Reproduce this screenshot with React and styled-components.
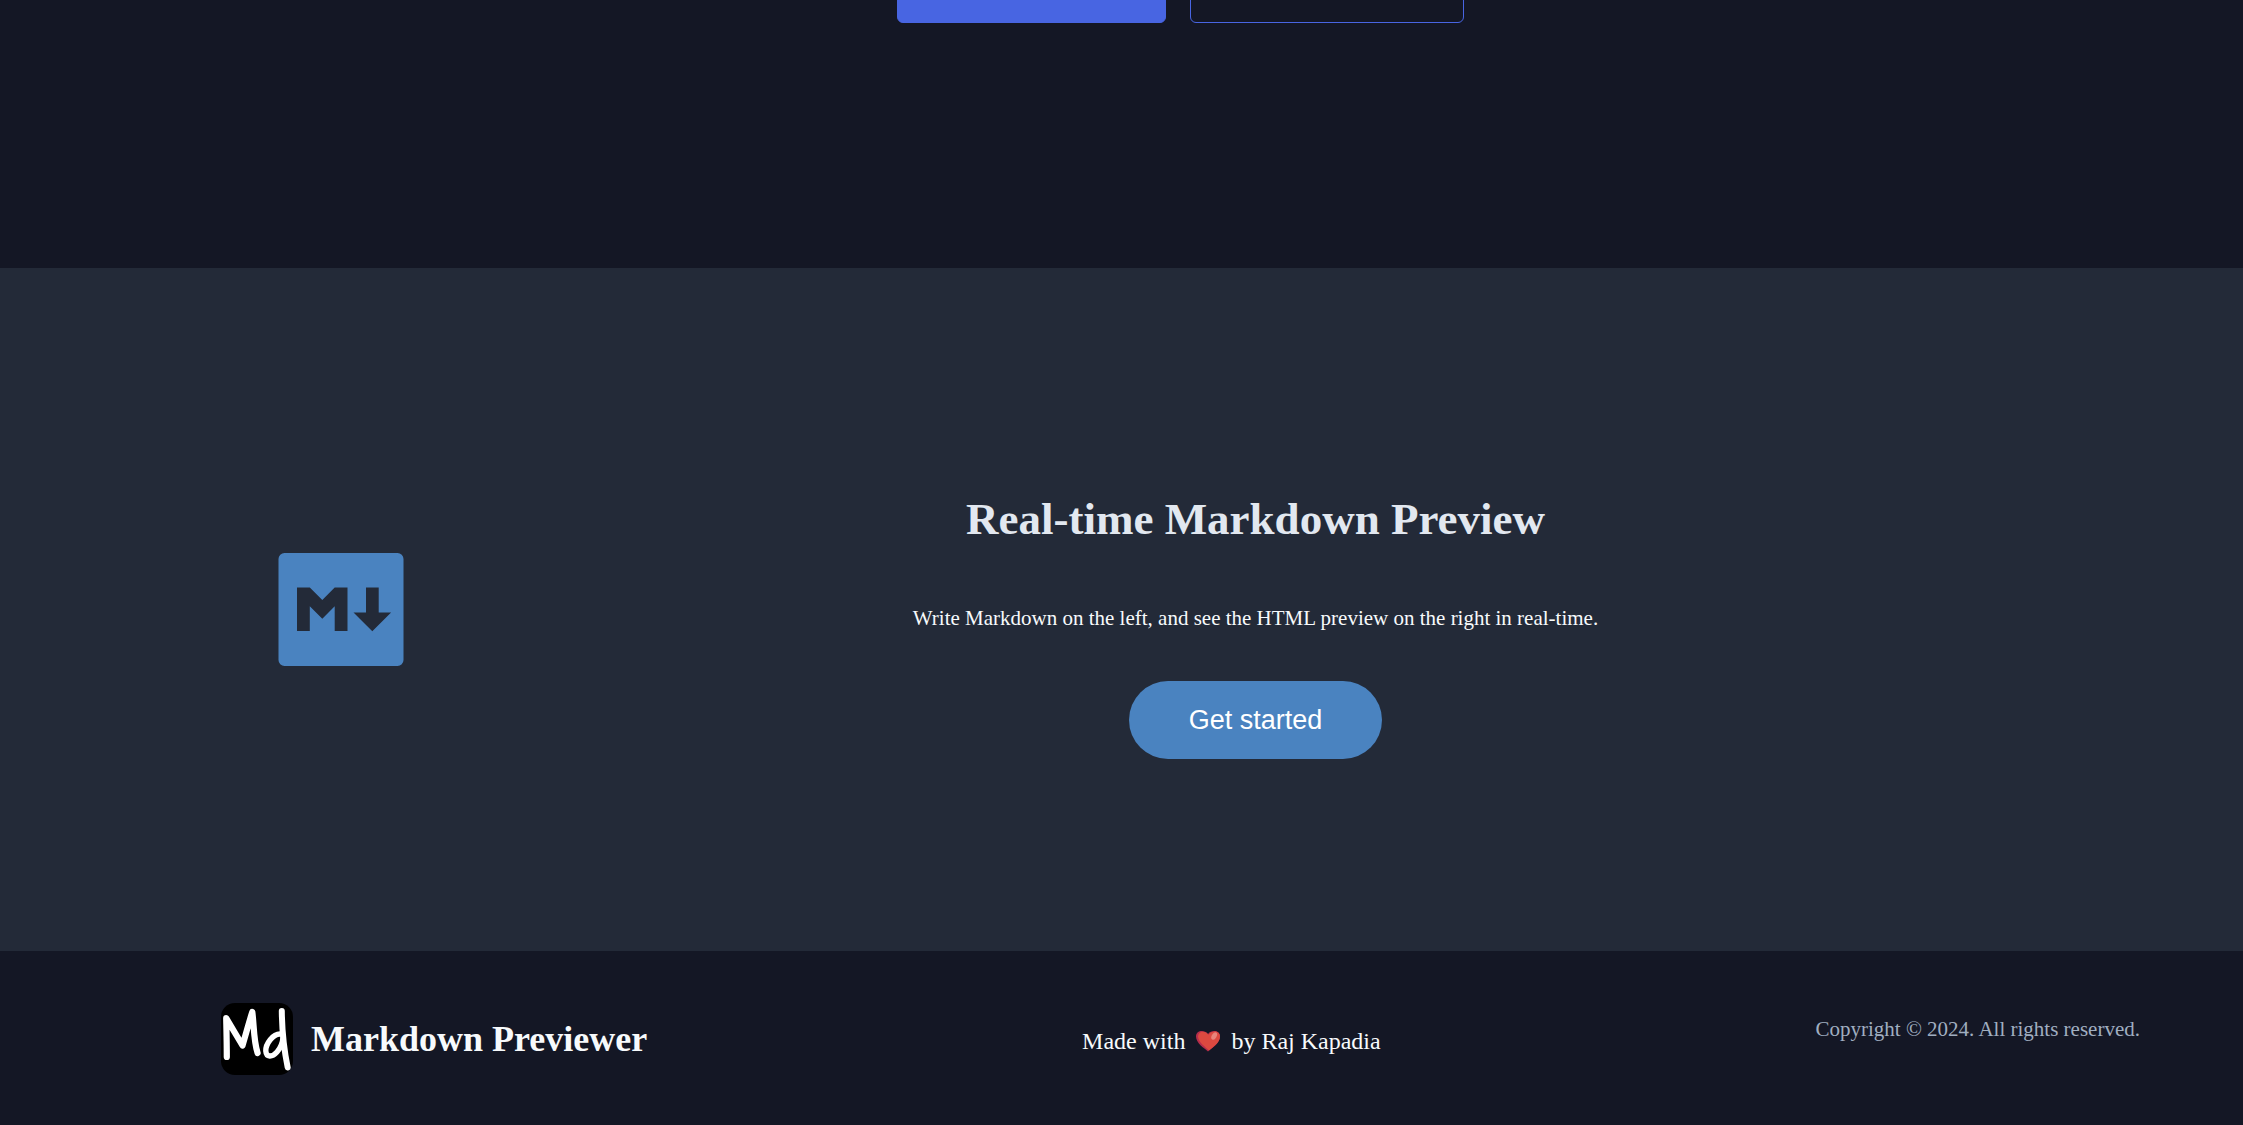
import React from "react";
import styled, { createGlobalStyle } from "styled-components";

const serif = `"Liberation Serif", "Times New Roman", serif`;
const sans = `"Liberation Sans", Arial, sans-serif`;

const GlobalStyle = createGlobalStyle`
  *, *::before, *::after { box-sizing: border-box; }
  body {
    margin: 0;
    background: #141725;
    color: #f7fafc;
    font-family: ${serif};
  }
`;

const Page = styled.div`
  display: flex;
  flex-direction: column;
  min-height: 100vh;
`;

const Hero = styled.section`
  display: flex;
  justify-content: center;
  padding: 0 0 245px 118px;
  overflow: hidden;
`;

const HeroActions = styled.div`
  display: flex;
  gap: 24px;
  margin-top: -40px;
`;

const HeroButton = styled.button`
  width: ${(p) => (p.$outlined ? 274 : 269)}px;
  height: 63px;
  border: 1px solid #4865e2;
  border-radius: 6px;
  background: ${(p) => (p.$outlined ? "transparent" : "#4865e2")};
  cursor: pointer;
`;

const Feature = styled.section`
  display: grid;
  grid-template-columns: auto 1fr;
  align-items: center;
  padding: 192px 136px 192px 278px;
  background: #232a38;
`;

const FeatureIcon = styled.svg`
  display: block;
  width: 126px;
  height: 113px;
`;

const FeatureBody = styled.div`
  display: flex;
  flex-direction: column;
  align-items: center;
  padding-top: 24px;
  text-align: center;
`;

const FeatureTitle = styled.h1`
  margin: 0;
  color: #e2e8f0;
  font-size: 45px;
  line-height: 71px;
`;

const FeatureText = styled.p`
  margin: 48px 0;
  font-size: 21px;
  line-height: 30px;
`;

const StartButton = styled.button`
  padding: 23px 60px;
  border: 0;
  border-radius: 40px;
  background: #4a83c0;
  color: #fff;
  font-family: ${sans};
  font-size: 27px;
  line-height: 32px;
  cursor: pointer;
`;

const Footer = styled.footer`
  display: flex;
  flex: 1;
  align-items: center;
  justify-content: space-between;
  padding: 50px 103px 48px 221px;
`;

const Brand = styled.div`
  display: flex;
  align-items: center;
  gap: 18px;
`;

const BrandLogo = styled.svg`
  display: block;
  width: 72px;
  height: 72px;
`;

const BrandName = styled.h2`
  margin: 0;
  font-size: 36px;
  line-height: 40px;
`;

const Credit = styled.p`
  display: flex;
  align-items: center;
  gap: 10px;
  margin: 0;
  padding-top: 4px;
  font-size: 24px;
  line-height: 36px;
`;

const Heart = styled.svg`
  width: 26px;
  height: 24px;
`;

const Copyright = styled.small`
  padding-bottom: 20px;
  color: #a0aec0;
  font-size: 21px;
  line-height: 30px;
`;

export default function App() {
  return (
    <Page>
      <GlobalStyle />
      <Hero>
        <HeroActions>
          <HeroButton type="button" aria-label="Primary action" />
          <HeroButton type="button" aria-label="Secondary action" $outlined />
        </HeroActions>
      </Hero>
      <Feature>
        <FeatureIcon viewBox="0 0 126 113" aria-hidden="true">
          <path
            fill="#4a83c0"
            fillRule="evenodd"
            d="M6.5 0H119.5a6 6 0 0 1 6 6V107a6 6 0 0 1-6 6H6.5a6 6 0 0 1-6-6V6a6 6 0 0 1 6-6ZM19 34.5V78H31.8V53.3L44.3 65.8 56.7 53.3V78H69.5V34.5H56.7L44.3 47 31.8 34.5ZM88 34.5V59.5H75.5L94.3 78.3 113.1 59.5H100.7V34.5Z"
          />
        </FeatureIcon>
        <FeatureBody>
          <FeatureTitle>Real-time Markdown Preview</FeatureTitle>
          <FeatureText>
            Write Markdown on the left, and see the HTML preview on the right in real-time.
          </FeatureText>
          <StartButton type="button">Get started</StartButton>
        </FeatureBody>
      </Feature>
      <Footer>
        <Brand>
          <BrandLogo viewBox="0 0 72 72" aria-hidden="true">
            <rect width="72" height="72" rx="14" fill="#000" />
            <g fill="none" stroke="#fff" strokeLinecap="round" strokeLinejoin="round">
              <path strokeWidth="6.2" d="M5.8 54C5.8 40 5.4 25 5.2 15.200L21.5 42.5C25 31 28 19 31.3 9C33 21 32.5 38 36.6 50" />
              <path strokeWidth="6" d="M60.8 8C61 28 63.5 49 66.7 64.5" />
              <path strokeWidth="5.4" d="M59.5 31C52 30.5 44.5 41 44.8 48C45.200 54.5 51 54.500 56 49C59.5 45 61.5 40 62 35" />
            </g>
          </BrandLogo>
          <BrandName>Markdown Previewer</BrandName>
        </Brand>
        <Credit>
          Made with
          <Heart viewBox="0 0 26 24" aria-hidden="true">
            <path fill="#b52d4c" d="M13 22.5C9 19 1 14 1 7.5C1 1.5 9 .3 13 5C17 .3 25 1.5 25 7.5C25 14 17 19 13 22.5Z" />
            <path fill="#dc4940" d="M14 21.5C10.5 18 3.5 13.5 3 7.5C3.2 2 10 1.3 13.5 5.8C17 .8 25 1.5 25 7.5C25 13.5 18 18 14 21.5Z" />
            <ellipse cx="19.2" cy="7" rx="2.4" ry="4" fill="#e8847b" transform="rotate(30 19.2 7)" />
          </Heart>
          by Raj Kapadia
        </Credit>
        <Copyright>Copyright © 2024. All rights reserved.</Copyright>
      </Footer>
    </Page>
  );
}
